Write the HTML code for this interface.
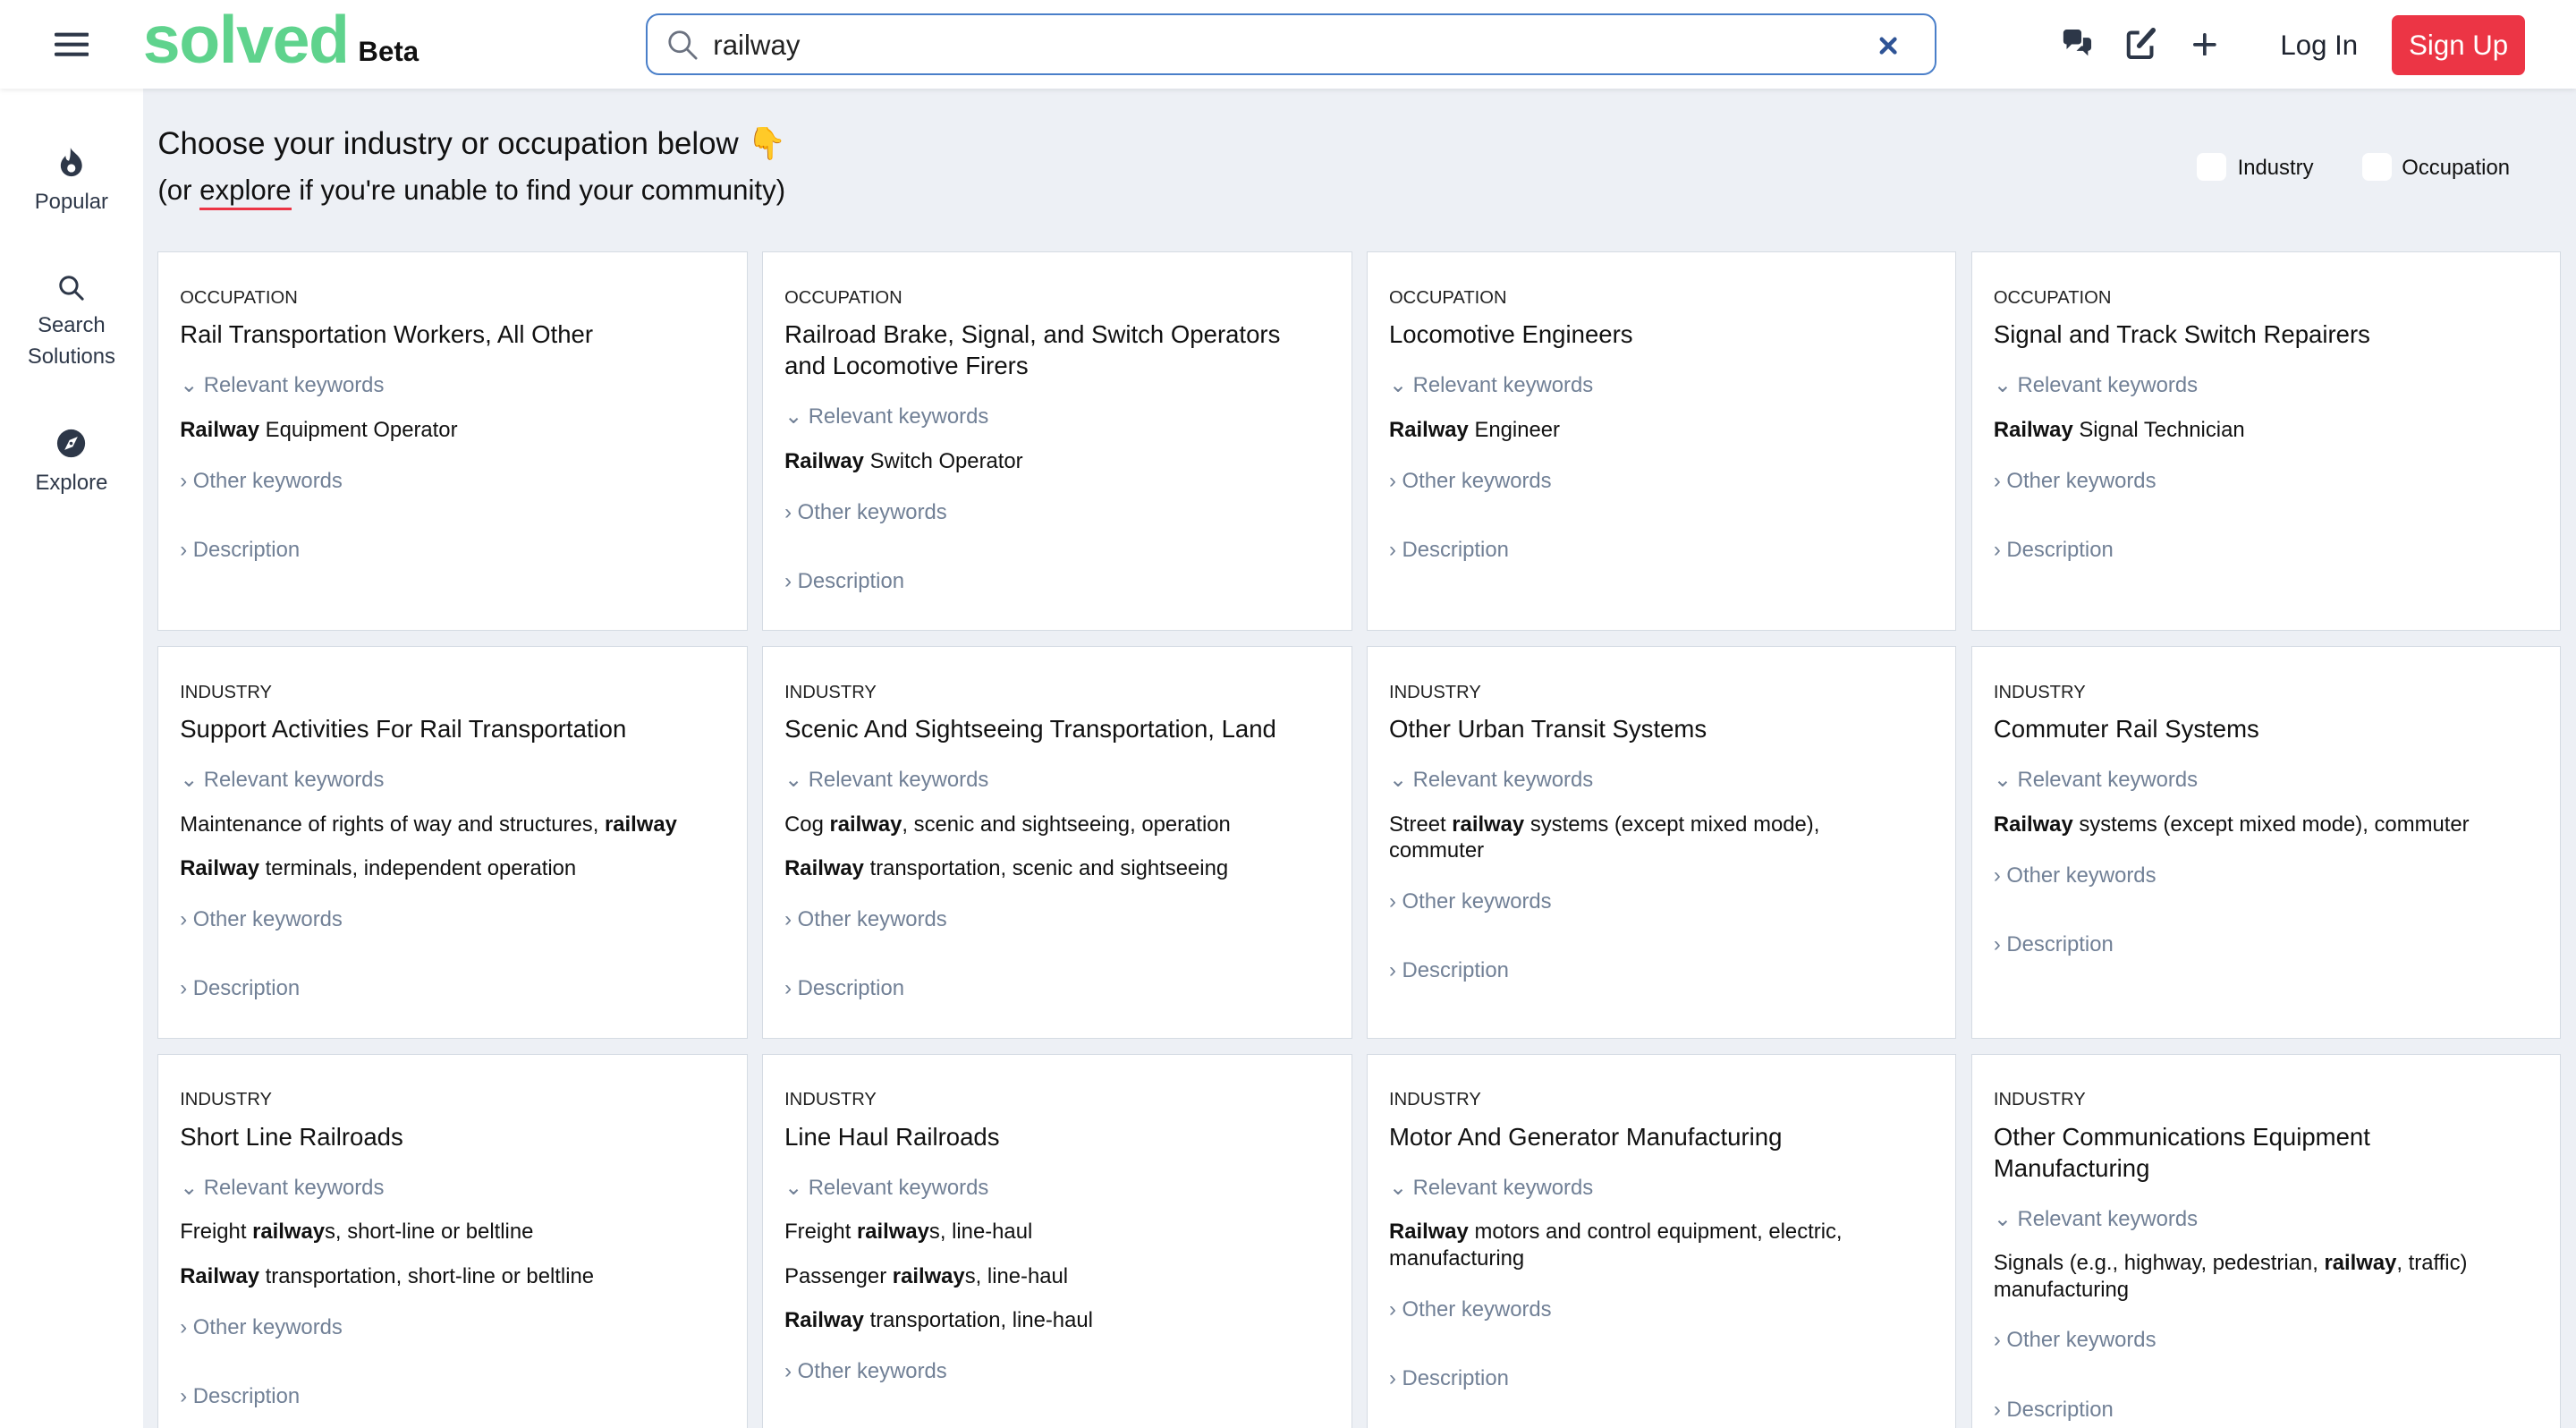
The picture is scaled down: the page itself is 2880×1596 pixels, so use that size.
<!DOCTYPE html>
<html><head><meta charset="utf-8"><style>
html{zoom:1.83673;overflow:hidden;height:869px;width:1568px}
*{box-sizing:border-box;margin:0;padding:0}
body{width:1568px;height:869px;overflow:hidden;background:#edf0f5;font-family:"Liberation Sans",sans-serif;color:#111}
#wrap{position:relative;width:1568px;height:869px;overflow:hidden}
.hdr{position:absolute;left:0;top:0;width:1568px;height:54px;background:#fff;box-shadow:0 1px 3px rgba(0,0,0,.08);z-index:2}
.side{position:absolute;left:0;top:54px;width:87px;height:815px;background:#fff}
.side .it{position:absolute;left:0;width:87px;text-align:center;font-size:13px;color:#2d3748;line-height:19px}
.grid{position:absolute;left:96px;top:153px;width:1463px;display:grid;grid-template-columns:repeat(4,359px);gap:9px}
.card{background:#fff;border:1px solid #d5dbe3;padding:21px 13px 22px}
.lb{font-size:11px;line-height:14px;color:#222}
.tt{font-size:15px;line-height:19px;margin-top:6px;color:#111}
.rel,.oth,.des{font-size:13px;line-height:16px;color:#718096}
.rel{margin-top:13px}
.kw{font-size:13px;line-height:16px;margin-top:11px;color:#111}
.oth{margin-top:15px}
.des{margin-top:26px}
</style></head><body><div id="wrap">
<div class="hdr">
 <svg style="position:absolute;left:33px;top:19px" width="21" height="16" viewBox="0 0 21 16"><path d="M1 2h19M1 8h19M1 14h19" stroke="#2d3748" stroke-width="2.2" stroke-linecap="round"/></svg>
 <div style="position:absolute;left:87px;top:0px;font-size:41px;font-weight:bold;color:#5fd38d;letter-spacing:-0.8px;line-height:48px">solved</div>
 <div style="position:absolute;left:218px;top:22px;font-size:17px;font-weight:bold;color:#111">Beta</div>
 <div style="position:absolute;left:393px;top:8px;width:786px;height:38px;border:1.5px solid #4a7fc9;border-radius:8px;background:#fff">
  <svg style="position:absolute;left:12px;top:9px" width="19" height="19" viewBox="0 0 19 19"><circle cx="7.5" cy="7.5" r="6" fill="none" stroke="#6b7280" stroke-width="1.5"/><path d="M12 12l5.5 5.5" stroke="#6b7280" stroke-width="1.5" stroke-linecap="round"/></svg>
  <div style="position:absolute;left:40px;top:9px;font-size:17px;color:#222">railway</div>
  <svg style="position:absolute;left:750px;top:13px" width="11" height="11" viewBox="0 0 11 11"><path d="M1.5 1.5l8 8M9.5 1.5l-8 8" stroke="#2f5496" stroke-width="2.4" stroke-linecap="round"/></svg>
 </div>
 <svg style="position:absolute;left:1255px;top:18px" width="19" height="18" viewBox="0 0 19 18"><path d="M1 2a2 2 0 012-2h7a2 2 0 012 2v5a2 2 0 01-2 2H6l-3 3V9H3A2 2 0 011 7z" fill="#2d3748"/><path d="M13 5h3a2 2 0 012 2v4a2 2 0 01-2 2v3l-3-3H9l3-3h1z" fill="#2d3748"/></svg>
 <svg style="position:absolute;left:1294px;top:17px" width="19" height="19" viewBox="0 0 19 19"><path d="M8 3H3a1.5 1.5 0 00-1.5 1.5v12A1.5 1.5 0 003 18h11a1.5 1.5 0 001.5-1.5V11" fill="none" stroke="#2d3748" stroke-width="2.2"/><path d="M16.5 1.5L8 11" stroke="#2d3748" stroke-width="3" stroke-linecap="round"/></svg>
 <svg style="position:absolute;left:1335px;top:20px" width="14" height="14" viewBox="0 0 14 14"><path d="M7 1v12M1 7h12" stroke="#2d3748" stroke-width="2" stroke-linecap="round"/></svg>
 <div style="position:absolute;left:1388px;top:18px;font-size:17px;color:#1f2430">Log In</div>
 <div style="position:absolute;left:1456px;top:9px;width:81px;height:37px;background:#ec3545;border-radius:4px;color:#fff;font-size:17px;text-align:center;line-height:37px">Sign Up</div>
</div>
<div class="side">
 <div class="it" style="top:36px"><svg width="15" height="18" viewBox="0 0 15 18"><path d="M7 0c1 3 7 5 7 11a6.5 6.5 0 01-13 0c0-3 2-5 3-6 0 2 1 3 2 3 1-2 1-5 1-8z" fill="#2d3748"/><circle cx="7.5" cy="12.5" r="2.5" fill="#fff"/></svg><br>Popular</div>
 <div class="it" style="top:113px"><svg width="16" height="16" viewBox="0 0 16 16"><circle cx="6.5" cy="6.5" r="5" fill="none" stroke="#2d3748" stroke-width="1.6"/><path d="M10.3 10.3l4.5 4.5" stroke="#2d3748" stroke-width="1.6" stroke-linecap="round"/></svg><br>Search<br>Solutions</div>
 <div class="it" style="top:207px"><svg width="18" height="18" viewBox="0 0 18 18"><circle cx="9" cy="9" r="8.5" fill="#2d3748"/><path d="M13 5l-5 2-3 6 5-2z" fill="#fff"/><circle cx="9" cy="9" r="1" fill="#2d3748"/></svg><br>Explore</div>
</div>
<div style="position:absolute;left:96px;top:74px;font-size:19px;line-height:24px;color:#111">Choose your industry or occupation below <span style="font-family:'Noto Sans CJK JP',sans-serif;color:#f4b400">👇</span></div>
<div style="position:absolute;left:96px;top:106px;font-size:17px;color:#111">(or <span style="border-bottom:2px solid #ec3545;padding-bottom:1px">explore</span> if you're unable to find your community)</div>
<div style="position:absolute;left:1337px;top:93px;width:18px;height:17px;background:#fff;border-radius:4px"></div>
<div style="position:absolute;left:1362px;top:95px;font-size:13px;color:#111">Industry</div>
<div style="position:absolute;left:1438px;top:93px;width:18px;height:17px;background:#fff;border-radius:4px"></div>
<div style="position:absolute;left:1462px;top:95px;font-size:13px;color:#111">Occupation</div>

<div class="grid">
<div class="card"><div class="lb">OCCUPATION</div><div class="tt">Rail Transportation Workers, All Other</div><div class="rel">⌄ Relevant keywords</div><div class="kw"><b>Railway</b> Equipment Operator</div><div class="oth">› Other keywords</div><div class="des">› Description</div></div>
<div class="card"><div class="lb">OCCUPATION</div><div class="tt">Railroad Brake, Signal, and Switch Operators<br>and Locomotive Firers</div><div class="rel">⌄ Relevant keywords</div><div class="kw"><b>Railway</b> Switch Operator</div><div class="oth">› Other keywords</div><div class="des">› Description</div></div>
<div class="card"><div class="lb">OCCUPATION</div><div class="tt">Locomotive Engineers</div><div class="rel">⌄ Relevant keywords</div><div class="kw"><b>Railway</b> Engineer</div><div class="oth">› Other keywords</div><div class="des">› Description</div></div>
<div class="card"><div class="lb">OCCUPATION</div><div class="tt">Signal and Track Switch Repairers</div><div class="rel">⌄ Relevant keywords</div><div class="kw"><b>Railway</b> Signal Technician</div><div class="oth">› Other keywords</div><div class="des">› Description</div></div>
<div class="card"><div class="lb">INDUSTRY</div><div class="tt">Support Activities For Rail Transportation</div><div class="rel">⌄ Relevant keywords</div><div class="kw">Maintenance of rights of way and structures, <b>railway</b></div><div class="kw"><b>Railway</b> terminals, independent operation</div><div class="oth">› Other keywords</div><div class="des">› Description</div></div>
<div class="card"><div class="lb">INDUSTRY</div><div class="tt">Scenic And Sightseeing Transportation, Land</div><div class="rel">⌄ Relevant keywords</div><div class="kw">Cog <b>railway</b>, scenic and sightseeing, operation</div><div class="kw"><b>Railway</b> transportation, scenic and sightseeing</div><div class="oth">› Other keywords</div><div class="des">› Description</div></div>
<div class="card"><div class="lb">INDUSTRY</div><div class="tt">Other Urban Transit Systems</div><div class="rel">⌄ Relevant keywords</div><div class="kw">Street <b>railway</b> systems (except mixed mode),<br>commuter</div><div class="oth">› Other keywords</div><div class="des">› Description</div></div>
<div class="card"><div class="lb">INDUSTRY</div><div class="tt">Commuter Rail Systems</div><div class="rel">⌄ Relevant keywords</div><div class="kw"><b>Railway</b> systems (except mixed mode), commuter</div><div class="oth">› Other keywords</div><div class="des">› Description</div></div>
<div class="card"><div class="lb">INDUSTRY</div><div class="tt">Short Line Railroads</div><div class="rel">⌄ Relevant keywords</div><div class="kw">Freight <b>railway</b>s, short-line or beltline</div><div class="kw"><b>Railway</b> transportation, short-line or beltline</div><div class="oth">› Other keywords</div><div class="des">› Description</div></div>
<div class="card"><div class="lb">INDUSTRY</div><div class="tt">Line Haul Railroads</div><div class="rel">⌄ Relevant keywords</div><div class="kw">Freight <b>railway</b>s, line-haul</div><div class="kw">Passenger <b>railway</b>s, line-haul</div><div class="kw"><b>Railway</b> transportation, line-haul</div><div class="oth">› Other keywords</div><div class="des">› Description</div></div>
<div class="card"><div class="lb">INDUSTRY</div><div class="tt">Motor And Generator Manufacturing</div><div class="rel">⌄ Relevant keywords</div><div class="kw"><b>Railway</b> motors and control equipment, electric,<br>manufacturing</div><div class="oth">› Other keywords</div><div class="des">› Description</div></div>
<div class="card"><div class="lb">INDUSTRY</div><div class="tt">Other Communications Equipment<br>Manufacturing</div><div class="rel">⌄ Relevant keywords</div><div class="kw">Signals (e.g., highway, pedestrian, <b>railway</b>, traffic)<br>manufacturing</div><div class="oth">› Other keywords</div><div class="des">› Description</div></div>
</div>
</div></body></html>
